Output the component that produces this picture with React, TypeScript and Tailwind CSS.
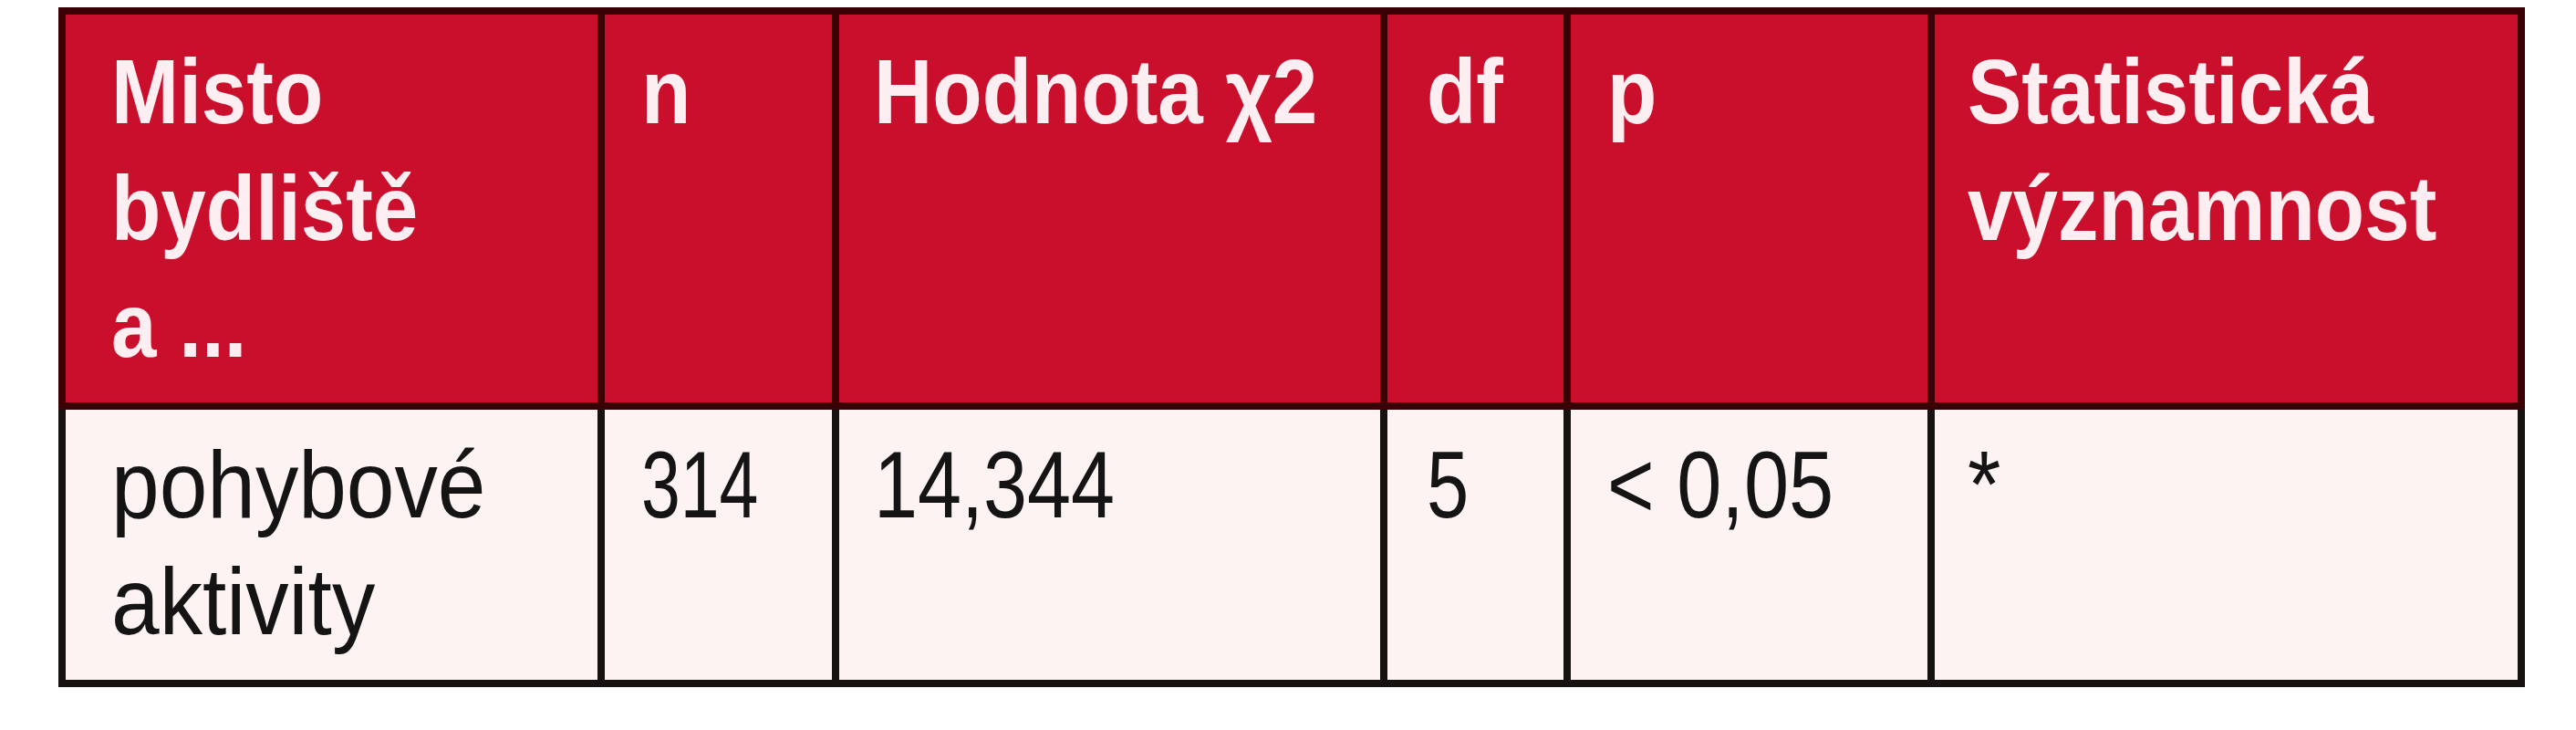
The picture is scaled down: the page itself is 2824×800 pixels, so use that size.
const font = { fontFamily: '"Liberation Sans", Arial, sans-serif' };

type Column = {
  head: string[];
  body: string[];
  width: number;
  pad: string;
  squeeze: string;
};

const columns: Column[] = [
  { head: ["Misto", "bydliště", "a ..."], body: ["pohybové", "aktivity"], width: 591, pad: "pl-[50px]", squeeze: "scale-x-[0.91]" },
  { head: ["n"], body: ["314"], width: 257, pad: "pl-[40px]", squeeze: "scale-x-[0.74]" },
  { head: ["Hodnota χ2"], body: ["14,344"], width: 601, pad: "pl-[38px]", squeeze: "scale-x-[0.83]" },
  { head: ["df"], body: ["5"], width: 201, pad: "pl-[43px]", squeeze: "scale-x-[0.8]" },
  { head: ["p"], body: ["< 0,05"], width: 399, pad: "pl-[40px]", squeeze: "scale-x-[0.85]" },
  { head: ["Statistická", "významnost"], body: ["*"], width: 647, pad: "pl-[36px]", squeeze: "scale-x-[0.9]" },
];

export default function App() {
  return (
    <div className="h-[800px] w-[2824px] bg-white pl-[64px] pt-[8px]" style={font}>
      <table className="table-fixed border-collapse">
        <colgroup>
          {columns.map((c, i) => (
            <col key={i} style={{ width: c.width }} />
          ))}
        </colgroup>
        <thead>
          <tr className="h-[433px]">
            {columns.map((c, i) => (
              <th
                key={i}
                className={`border-[8px] border-[#3a0005] bg-[#ca0f2d] pt-[20px] pr-2 text-left align-top text-[100px] font-bold leading-[128px] text-[#fdeef1] ${c.pad}`}
              >
                {c.head.map((line, j) => (
                  <div key={j} className="whitespace-nowrap">
                    <span className="inline-block origin-left scale-x-[0.89]">{line}</span>
                  </div>
                ))}
              </th>
            ))}
          </tr>
        </thead>
        <tbody>
          <tr className="h-[304px]">
            {columns.map((c, i) => (
              <td
                key={i}
                className={`border-[8px] border-[#16120f] bg-[#fdf3f3] pt-[18px] pr-2 text-left align-top text-[104px] font-normal leading-[128px] text-[#141414] ${c.pad}`}
              >
                {c.body.map((line, j) => (
                  <div key={j} className="whitespace-nowrap">
                    <span className={`inline-block origin-left ${c.squeeze}`}>{line}</span>
                  </div>
                ))}
              </td>
            ))}
          </tr>
        </tbody>
      </table>
    </div>
  );
}
